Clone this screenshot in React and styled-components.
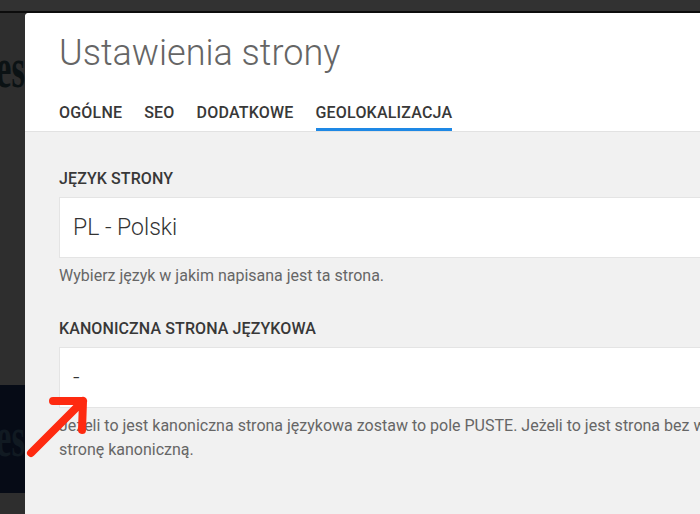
import React from 'react';
import styled, { createGlobalStyle } from 'styled-components';

const GlobalStyle = createGlobalStyle`
  html, body {
    margin: 0;
    padding: 0;
    background: #2e2e2e;
  }
  body {
    font-family: Roboto, 'Liberation Sans', sans-serif;
  }
`;

const tabs = ['Ogólne', 'SEO', 'Dodatkowe', 'Geolokalizacja'];

const App = () => {
  return (
    <Screen>
      <GlobalStyle />
      <TopBar />
      <Stage>
        <Backdrop>
          <BackdropWord>es</BackdropWord>
          <BackdropBanner>
            <BackdropWord dim>es</BackdropWord>
          </BackdropBanner>
        </Backdrop>
        <Modal>
          <Header>
            <Title>Ustawienia strony</Title>
            <Tabs>
              {tabs.map((tab) => (
                <Tab key={tab} active={tab === 'Geolokalizacja'}>
                  {tab}
                </Tab>
              ))}
            </Tabs>
          </Header>
          <Body>
            <Field>
              <Label>Język strony</Label>
              <Input>PL - Polski</Input>
              <Hint>Wybierz język w jakim napisana jest ta strona.</Hint>
            </Field>
            <Field>
              <Label>Kanoniczna strona językowa</Label>
              <Input>-</Input>
              <Hint>
                Jeżeli to jest kanoniczna strona językowa zostaw to pole PUSTE. Jeżeli to jest strona bez wersji
                językowej wskaż
                <br />
                stronę kanoniczną.
              </Hint>
            </Field>
          </Body>
        </Modal>
      </Stage>
      <Arrow viewBox="0 0 80 80" width="80" height="80">
        <path d="M11 63 L63 11 M33 11 L63 11 L62 40" />
      </Arrow>
    </Screen>
  );
};

export default App;

const Screen = styled.div`
  position: relative;
  width: 700px;
  height: 514px;
  overflow: hidden;
  background: #2e2e2e;
  display: flex;
  flex-direction: column;
`;

const TopBar = styled.div`
  height: 11px;
  flex-shrink: 0;
  background: #323232;
  border-bottom: 2px solid #0c0c0c;
`;

const Stage = styled.div`
  flex: 1;
  display: flex;
  min-height: 0;
`;

const Backdrop = styled.div`
  width: 25px;
  flex-shrink: 0;
  overflow: hidden;
  display: flex;
  flex-direction: column;
  padding-top: 30px;
  box-sizing: border-box;
`;

const BackdropWord = styled.div`
  width: 25px;
  display: flex;
  justify-content: flex-end;
  font-family: 'Liberation Serif', serif;
  font-weight: 700;
  font-size: 58px;
  line-height: 50px;
  color: ${(p) => (p.dim ? '#111a22' : '#0b1214')};
  transform: scaleX(0.6);
  transform-origin: right center;
  white-space: nowrap;
`;

const BackdropBanner = styled.div`
  margin-top: 292px;
  height: 108px;
  background: #060b16;
  padding-top: 27px;
  box-sizing: border-box;
`;

const Modal = styled.div`
  width: 1000px;
  flex-shrink: 0;
  background: #f1f1f1;
  border-top-left-radius: 4px;
  overflow: hidden;
  display: flex;
  flex-direction: column;
`;

const Header = styled.div`
  background: #fff;
  padding: 20px 34px 0;
  border-bottom: 1px solid #e2e2e2;
`;

const Title = styled.h1`
  margin: 0;
  font-size: 36px;
  line-height: 40px;
  font-weight: 300;
  color: #656565;
`;

const Tabs = styled.div`
  display: flex;
  gap: 22px;
  margin-top: 31px;
`;

const Tab = styled.div`
  font-size: 16px;
  line-height: 18px;
  font-weight: 500;
  letter-spacing: 0.2px;
  text-transform: uppercase;
  color: #383838;
  padding-bottom: 6px;
  border-bottom: 3px solid ${(p) => (p.active ? '#1e88e5' : 'transparent')};
`;

const Body = styled.div`
  padding: 38px 34px 0;
  display: flex;
  flex-direction: column;
  gap: 32px;
`;

const Field = styled.div`
  display: flex;
  flex-direction: column;
`;

const Label = styled.div`
  font-size: 16px;
  line-height: 18px;
  font-weight: 500;
  letter-spacing: 0.1px;
  text-transform: uppercase;
  color: #383838;
`;

const Input = styled.div`
  margin-top: 9px;
  height: 61px;
  box-sizing: border-box;
  background: #fff;
  border: 1px solid #e4e4e4;
  padding: 0 13px;
  display: flex;
  align-items: center;
  font-size: 23px;
  font-weight: 300;
  color: #333;
`;

const Hint = styled.div`
  margin-top: 6px;
  font-size: 16px;
  line-height: 24px;
  color: #666;
`;

const Arrow = styled.svg`
  position: absolute;
  left: 20px;
  top: 390px;
  fill: none;
  stroke: #fe2a10;
  stroke-width: 8;
  stroke-linecap: round;
  stroke-linejoin: round;
`;
